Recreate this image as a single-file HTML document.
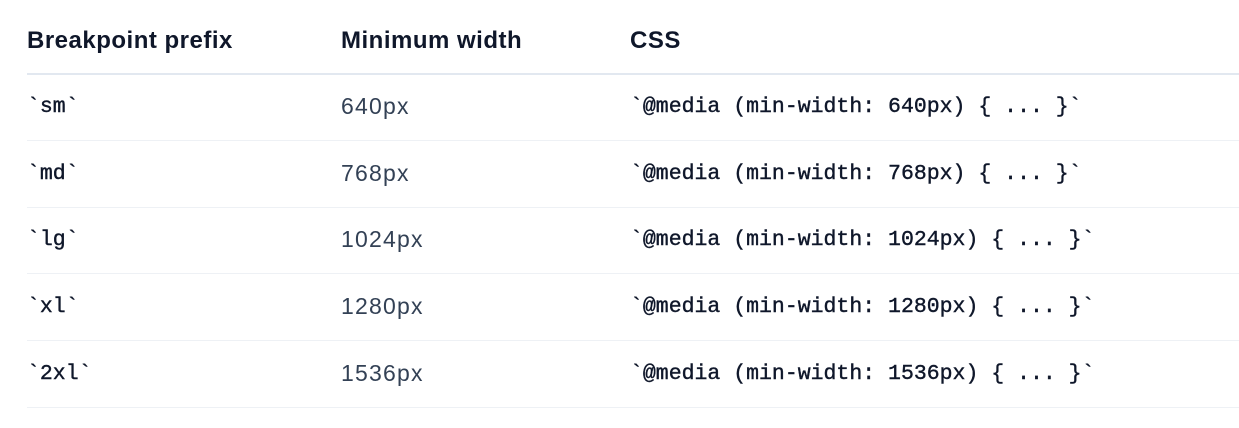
<!DOCTYPE html>
<html><head><style>
body{margin:0;background:#fff;width:1239px;height:428px;overflow:hidden;font-family:"Liberation Sans",sans-serif}
.t{position:absolute;left:27px;width:1212px;top:0}
.r{position:absolute;left:0;width:1212px;height:66px;border-bottom:1px solid #eef1f5}
.h{top:7px;height:66px;border-bottom:2px solid #e2e8f0}
.c{position:absolute;top:0;line-height:66px;white-space:nowrap}
.h .c{font-weight:bold;font-size:24px;letter-spacing:0.5px;color:#0f172a;line-height:68px}
.m{font-family:"Liberation Mono",monospace;font-size:21.5px;color:#0f172a;font-weight:normal;-webkit-text-stroke:0.4px #0f172a}
.n{font-size:23px;letter-spacing:1.2px;color:#334155;line-height:64px}
</style></head><body>
<div class="t">
<div class="r h"><div class="c" style="left:0">Breakpoint prefix</div><div class="c" style="left:314px">Minimum width</div><div class="c" style="left:603px">CSS</div></div>
<div class="r" style="top:74px"><div class="c m" style="left:0">`sm`</div><div class="c n" style="left:314px">640px</div><div class="c m" style="left:603px">`@media (min-width: 640px) { ... }`</div></div>
<div class="r" style="top:141px"><div class="c m" style="left:0">`md`</div><div class="c n" style="left:314px">768px</div><div class="c m" style="left:603px">`@media (min-width: 768px) { ... }`</div></div>
<div class="r" style="top:207px"><div class="c m" style="left:0">`lg`</div><div class="c n" style="left:314px">1024px</div><div class="c m" style="left:603px">`@media (min-width: 1024px) { ... }`</div></div>
<div class="r" style="top:274px"><div class="c m" style="left:0">`xl`</div><div class="c n" style="left:314px">1280px</div><div class="c m" style="left:603px">`@media (min-width: 1280px) { ... }`</div></div>
<div class="r" style="top:341px"><div class="c m" style="left:0">`2xl`</div><div class="c n" style="left:314px">1536px</div><div class="c m" style="left:603px">`@media (min-width: 1536px) { ... }`</div></div>
</div>
</body></html>
